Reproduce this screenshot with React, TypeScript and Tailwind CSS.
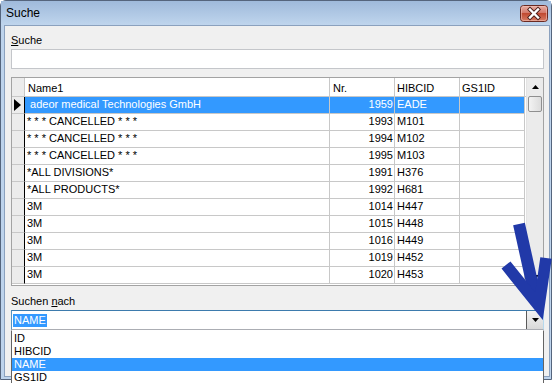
import React from "react";

type Row = { name: string; nr: string; hib: string; sel?: boolean };

const rows: Row[] = [
  { name: " adeor medical Technologies GmbH", nr: "1959", hib: "EADE", sel: true },
  { name: "* * * CANCELLED * * *", nr: "1993", hib: "M101" },
  { name: "* * * CANCELLED * * *", nr: "1994", hib: "M102" },
  { name: "* * * CANCELLED * * *", nr: "1995", hib: "M103" },
  { name: "*ALL DIVISIONS*", nr: "1991", hib: "H376" },
  { name: "*ALL PRODUCTS*", nr: "1992", hib: "H681" },
  { name: "3M", nr: "1014", hib: "H447" },
  { name: "3M", nr: "1015", hib: "H448" },
  { name: "3M", nr: "1016", hib: "H449" },
  { name: "3M", nr: "1019", hib: "H452" },
  { name: "3M", nr: "1020", hib: "H453" },
];

function CloseButton() {
  return (
    <svg width="28" height="17" viewBox="0 0 28 17">
      <defs>
        <linearGradient id="cb" x1="0" y1="0" x2="0" y2="1">
          <stop offset="0" stopColor="#e9b1a7" />
          <stop offset="0.45" stopColor="#d47a6b" />
          <stop offset="0.5" stopColor="#c14a31" />
          <stop offset="1" stopColor="#d88069" />
        </linearGradient>
      </defs>
      <rect x="0.5" y="0.5" width="27" height="16" rx="3" fill="url(#cb)" stroke="#6b2a22" />
      <rect x="1.5" y="1.5" width="25" height="14" rx="2" fill="none" stroke="#f2c2b8" strokeOpacity="0.6" />
      <path d="M10 4.5 L18 12.5 M18 4.5 L10 12.5" stroke="#4a1d18" strokeWidth="4.2" strokeLinecap="square" />
      <path d="M10 4.5 L18 12.5 M18 4.5 L10 12.5" stroke="#ffffff" strokeWidth="2.4" strokeLinecap="square" />
    </svg>
  );
}

const cellBase = "border-r border-b border-[#c8c8c8]";

export default function App() {
  return (
    <div className="relative w-[554px] h-[383px] overflow-hidden bg-white font-['Liberation_Sans',Arial,sans-serif] text-[11px] leading-[13px] text-black">
      <div className="flex h-[380px] w-[552px] flex-col rounded-t-[6px] border border-[#55657d] bg-[#bdd3ec]">
        {/* title bar */}
        <div className="flex h-[24px] items-start justify-between bg-gradient-to-b from-[#9fbadb] to-[#bfd5ed] pl-[5px] pr-[3px]">
          <span className="mt-[5px] text-[12px] leading-[15px]">Suche</span>
          <div className="mt-[4px]">
            <CloseButton />
          </div>
        </div>
        {/* frame + content */}
        <div className="flex flex-1 pl-[3px] pr-[1px] pb-[2px]">
          <div className="relative flex flex-1 flex-col border border-[#8ba1be] bg-[#f0f0f0] pl-[6px] pr-[5px] pt-[8px]">
            <div className="h-[13px]">
              <span className="underline">S</span>uche
            </div>
            <div className="mt-[2px] h-[20px] border border-[#c4c6ca] bg-white" />

            {/* grid */}
            <div className="mt-[8px] flex h-[209px] border border-[#a3a3a3] bg-white">
              <div className="flex flex-1 flex-col">
                {/* header */}
                <div className="flex h-[19px] border-b border-[#c8c8c8]">
                  <div className="w-[13px] border-r border-[#c8c8c8] bg-[#ececec]" />
                  <div className="w-[305px] border-r border-[#c8c8c8] pl-[3px] pt-[4px]">Name1</div>
                  <div className="w-[65px] border-r border-[#c8c8c8] pl-[3px] pt-[4px]">Nr.</div>
                  <div className="w-[65px] border-r border-[#c8c8c8] pl-[2px] pt-[4px]">HIBCID</div>
                  <div className="w-[65px] border-r border-[#c8c8c8] pl-[2px] pt-[4px]">GS1ID</div>
                </div>
                {rows.map((r, i) => (
                  <div key={i} className="flex h-[17px]">
                    <div className="flex w-[13px] items-center border-r border-r-black border-b border-b-[#c8c8c8] bg-[#ececec]">
                      {r.sel && (
                        <svg width="8" height="12" viewBox="0 0 8 12" className="ml-[2px]">
                          <path d="M0 0 L7 6 L0 12 Z" fill="#000" />
                        </svg>
                      )}
                    </div>
                    <div
                      className={
                        r.sel
                          ? `w-[305px] whitespace-pre ${cellBase} bg-[#3399ff] pl-[2px] pt-[1px] text-white`
                          : `w-[305px] whitespace-pre ${cellBase} pl-[2px] pt-[1px]`
                      }
                    >
                      {r.name}
                    </div>
                    <div
                      className={
                        r.sel
                          ? `w-[65px] ${cellBase} bg-[#3399ff] pr-[1px] pt-[1px] text-right text-white`
                          : `w-[65px] ${cellBase} pr-[1px] pt-[1px] text-right`
                      }
                    >
                      {r.nr}
                    </div>
                    <div
                      className={
                        r.sel
                          ? `w-[65px] ${cellBase} bg-[#3399ff] pl-[2px] pt-[1px] text-white`
                          : `w-[65px] ${cellBase} pl-[2px] pt-[1px]`
                      }
                    >
                      {r.hib}
                    </div>
                    <div className={r.sel ? `w-[65px] ${cellBase} bg-[#3399ff]` : `w-[65px] ${cellBase}`} />
                  </div>
                ))}
              </div>
              {/* scrollbar */}
              <div className="flex w-[17px] flex-col border-l border-[#e3e3e3] bg-[#ebebeb]">
                <div className="flex h-[18px] items-center justify-center">
                  <svg width="7" height="4" viewBox="0 0 7 4">
                    <path d="M0 4 L3.5 0 L7 4 Z" fill="#000" />
                  </svg>
                </div>
                <div className="mx-[1px] h-[16px] rounded-[2px] border border-[#8f8f8f] bg-gradient-to-r from-[#f3f3f3] to-[#dcdcdc]" />
                <div className="flex-1" />
                <div className="flex h-[17px] items-center justify-center">
                  <svg width="7" height="4" viewBox="0 0 7 4">
                    <path d="M0 0 L3.5 4 L7 0 Z" fill="#000" />
                  </svg>
                </div>
              </div>
            </div>

            <div className="mt-[9px] h-[13px]">
              Suchen <span className="underline">n</span>ach
            </div>
            {/* combo */}
            <div className="mt-[2px] flex h-[20px] border border-[#abadb3] border-t-[#3d7bad] border-l-[#5794bf] border-r-[#b7d9ed] bg-white">
              <div className="flex flex-1 items-center pl-[1px]">
                <span className="bg-[#3399ff] px-[1px] text-white">NAME</span>
              </div>
              <div className="flex w-[17px] items-center justify-center border-l border-[#5a5a5a] bg-gradient-to-b from-[#f2f2f2] to-[#d9d9d9]">
                <svg width="7" height="4" viewBox="0 0 7 4">
                  <path d="M0 0 L3.5 4 L7 0 Z" fill="#000" />
                </svg>
              </div>
            </div>
            <div className="flex-1" />
          </div>
        </div>
      </div>

      {/* dropdown list (popup) */}
      <div className="absolute left-[11px] top-[330px] w-[533px] border-x border-t border-[#646464] border-t-white bg-white pt-[1px]">
        <div className="h-[13px] pl-[2px]">ID</div>
        <div className="h-[13px] pl-[2px]">HIBCID</div>
        <div className="h-[13px] bg-[#3399ff] pl-[2px] text-white">NAME</div>
        <div className="h-[13px] pl-[2px]">GS1ID</div>
      </div>

      {/* annotation arrow */}
      <svg className="pointer-events-none absolute left-0 top-0" width="554" height="383">
        <path d="M519 224 L535 296" stroke="#2139a8" strokeWidth="12" fill="none" />
        <path d="M506 265 L539 306 L546 258" stroke="#2139a8" strokeWidth="11.5" fill="none" strokeLinejoin="miter" strokeMiterlimit="10" />
      </svg>
    </div>
  );
}
